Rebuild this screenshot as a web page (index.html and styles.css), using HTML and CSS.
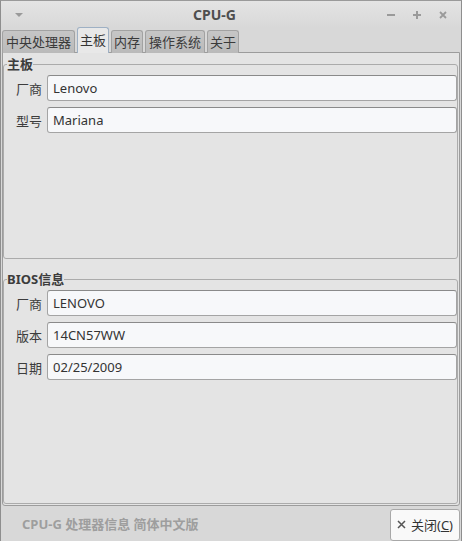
FILE: index.html
```html
<!DOCTYPE html>
<html lang="zh">
<head>
<meta charset="utf-8">
<title>CPU-G</title>
<link rel="stylesheet" href="styles.css">
</head>
<body>
<div class="window">
  <div class="titlebar">
    <div class="tb-left"><span class="menu-arrow"></span></div>
    <div class="title">CPU-G</div>
    <div class="tb-right">
      <svg class="wbtn" width="10" height="10" viewBox="0 0 10 10"><rect x="1" y="4" width="8" height="2" fill="#9a9a9a"/></svg>
      <svg class="wbtn" width="10" height="10" viewBox="0 0 10 10"><rect x="1" y="4" width="8" height="2" fill="#9a9a9a"/><rect x="4" y="1" width="2" height="8" fill="#9a9a9a"/></svg>
      <svg class="wbtn" width="10" height="10" viewBox="0 0 10 10"><path d="M2 2 L8 8 M8 2 L2 8" stroke="#9a9a9a" stroke-width="1.8"/></svg>
    </div>
  </div>
  <div class="tabs">
    <div class="tab">中央处理器</div>
    <div class="tab narrow active">主板</div>
    <div class="tab narrow">内存</div>
    <div class="tab">操作系统</div>
    <div class="tab narrow">关于</div>
  </div>
  <div class="notebook">
    <fieldset class="frame frame-board">
      <legend>主板</legend>
      <div class="grid">
        <label class="lbl">厂商</label><div class="entry">Lenovo</div>
        <label class="lbl">型号</label><div class="entry">Mariana</div>
      </div>
    </fieldset>
    <fieldset class="frame frame-bios">
      <legend>BIOS信息</legend>
      <div class="grid">
        <label class="lbl">厂商</label><div class="entry">LENOVO</div>
        <label class="lbl">版本</label><div class="entry">14CN57WW</div>
        <label class="lbl">日期</label><div class="entry">02/25/2009</div>
      </div>
    </fieldset>
  </div>
  <div class="footer">
    <div class="status">CPU-G 处理器信息 简体中文版</div>
    <button class="close-btn"><svg class="x" width="9" height="9" viewBox="0 0 9 9"><path d="M1 1 L8 8 M8 1 L1 8" stroke="#555" stroke-width="1.5"/></svg><span>关闭(<u>C</u>)</span></button>
  </div>
</div>
</body>
</html>
```
FILE: styles.css
```css
html, body {
  margin: 0;
  padding: 0;
  background: #d8d8d8;
}
body {
  font-family: "Noto Sans", "Open Sans", "Noto Sans CJK SC", sans-serif;
  font-size: 13px;
  color: #3c3c3c;
}
.window {
  width: 462px;
  height: 541px;
  box-sizing: border-box;
  border-left: 1px solid #8e8e8e;
  border-right: 1px solid #8e8e8e;
  border-top: 1px solid #9a9a9a;
  background: #d8d8d8;
  display: flex;
  flex-direction: column;
  overflow: hidden;
}
.titlebar {
  height: 27px;
  flex: none;
  display: flex;
  align-items: center;
  background: linear-gradient(#e4e4e4, #d8d8d8);
}
.tb-left {
  width: 36px;
  display: flex;
  justify-content: center;
}
.menu-arrow {
  width: 0;
  height: 0;
  border-left: 4px solid transparent;
  border-right: 4px solid transparent;
  border-top: 4px solid #9a9a9a;
}
.title {
  flex: 1;
  text-align: center;
  font-weight: bold;
  font-size: 14px;
  color: #4e4e4e;
  padding-left: 11px;
}
.tb-right {
  width: 80px;
  display: flex;
  gap: 16px;
  align-items: center;
  padding-left: 5px;
  box-sizing: border-box;
}
.wbtn { display: block; }
.tabs {
  height: 25px;
  flex: none;
  display: flex;
  align-items: flex-end;
  gap: 2px;
  padding-left: 1px;
  margin-bottom: -1px;
  position: relative;
  z-index: 1;
}
.tab {
  height: 23px;
  box-sizing: border-box;
  padding: 0 3px;
  border: 1px solid #a2a2a2;
  border-bottom: none;
  border-radius: 3px 3px 0 0;
  background: linear-gradient(#c6c6c6, #bababa);
  color: #3a3a3a;
  line-height: 22px;
  white-space: nowrap;
}
.tab.narrow {
  padding: 0 2px;
}
.tab.active {
  height: 26px;
  background: #e8e8e8;
  border-color: #9eb0c4;
  line-height: 24px;
  color: #333;
}
.notebook {
  flex: none;
  height: 454px;
  box-sizing: border-box;
  margin: 0 1px;
  border: 1px solid #9c9c9c;
  border-radius: 0 0 3px 3px;
  background: #e4e4e4;
  display: flex;
  flex-direction: column;
  padding: 3px 0 1px 0;
}
.frame {
  margin: 0 1px 0 0;
  padding: 3px 0 0 12px;
  border: 1px solid #ababab;
  border-radius: 3px;
  min-width: 0;
}
.frame legend {
  font-weight: bold;
  font-size: 13px;
  line-height: 16px;
  padding: 0;
  margin-left: -9px;
  color: #3c3c3c;
}
.frame-board {
  height: 203px;
  box-sizing: border-box;
  flex: none;
}
.frame-bios {
  margin-top: 12px;
  flex: 1;
}
.grid {
  display: grid;
  grid-template-columns: auto 1fr;
  column-gap: 5px;
  row-gap: 6px;
  align-items: center;
}
.lbl {
  color: #3c3c3c;
}
.entry {
  height: 26px;
  box-sizing: border-box;
  border: 1px solid #a4a4a4;
  border-top-color: #8a8a8a;
  border-radius: 3px;
  background: #f7f8fa;
  padding-left: 5px;
  line-height: 24px;
  color: #333;
}
.footer {
  flex: 1;
  display: flex;
  align-items: flex-start;
  justify-content: space-between;
  background: #d8d8d8;
}
.status {
  margin-left: 21px;
  margin-top: 8px;
  font-weight: bold;
  color: #9e9e9e;
}
.close-btn {
  margin-top: 3px;
  margin-right: 1px;
  width: 70px;
  height: 32px;
  box-sizing: border-box;
  border: 1px solid #a8a8a8;
  border-radius: 3px;
  background: #f9f9f9;
  font-family: inherit;
  font-size: 13px;
  color: #333;
  padding: 0 0 2px 0;
  display: flex;
  align-items: center;
  justify-content: center;
  gap: 5px;
}
.close-btn .x {
  display: block;
}
```
